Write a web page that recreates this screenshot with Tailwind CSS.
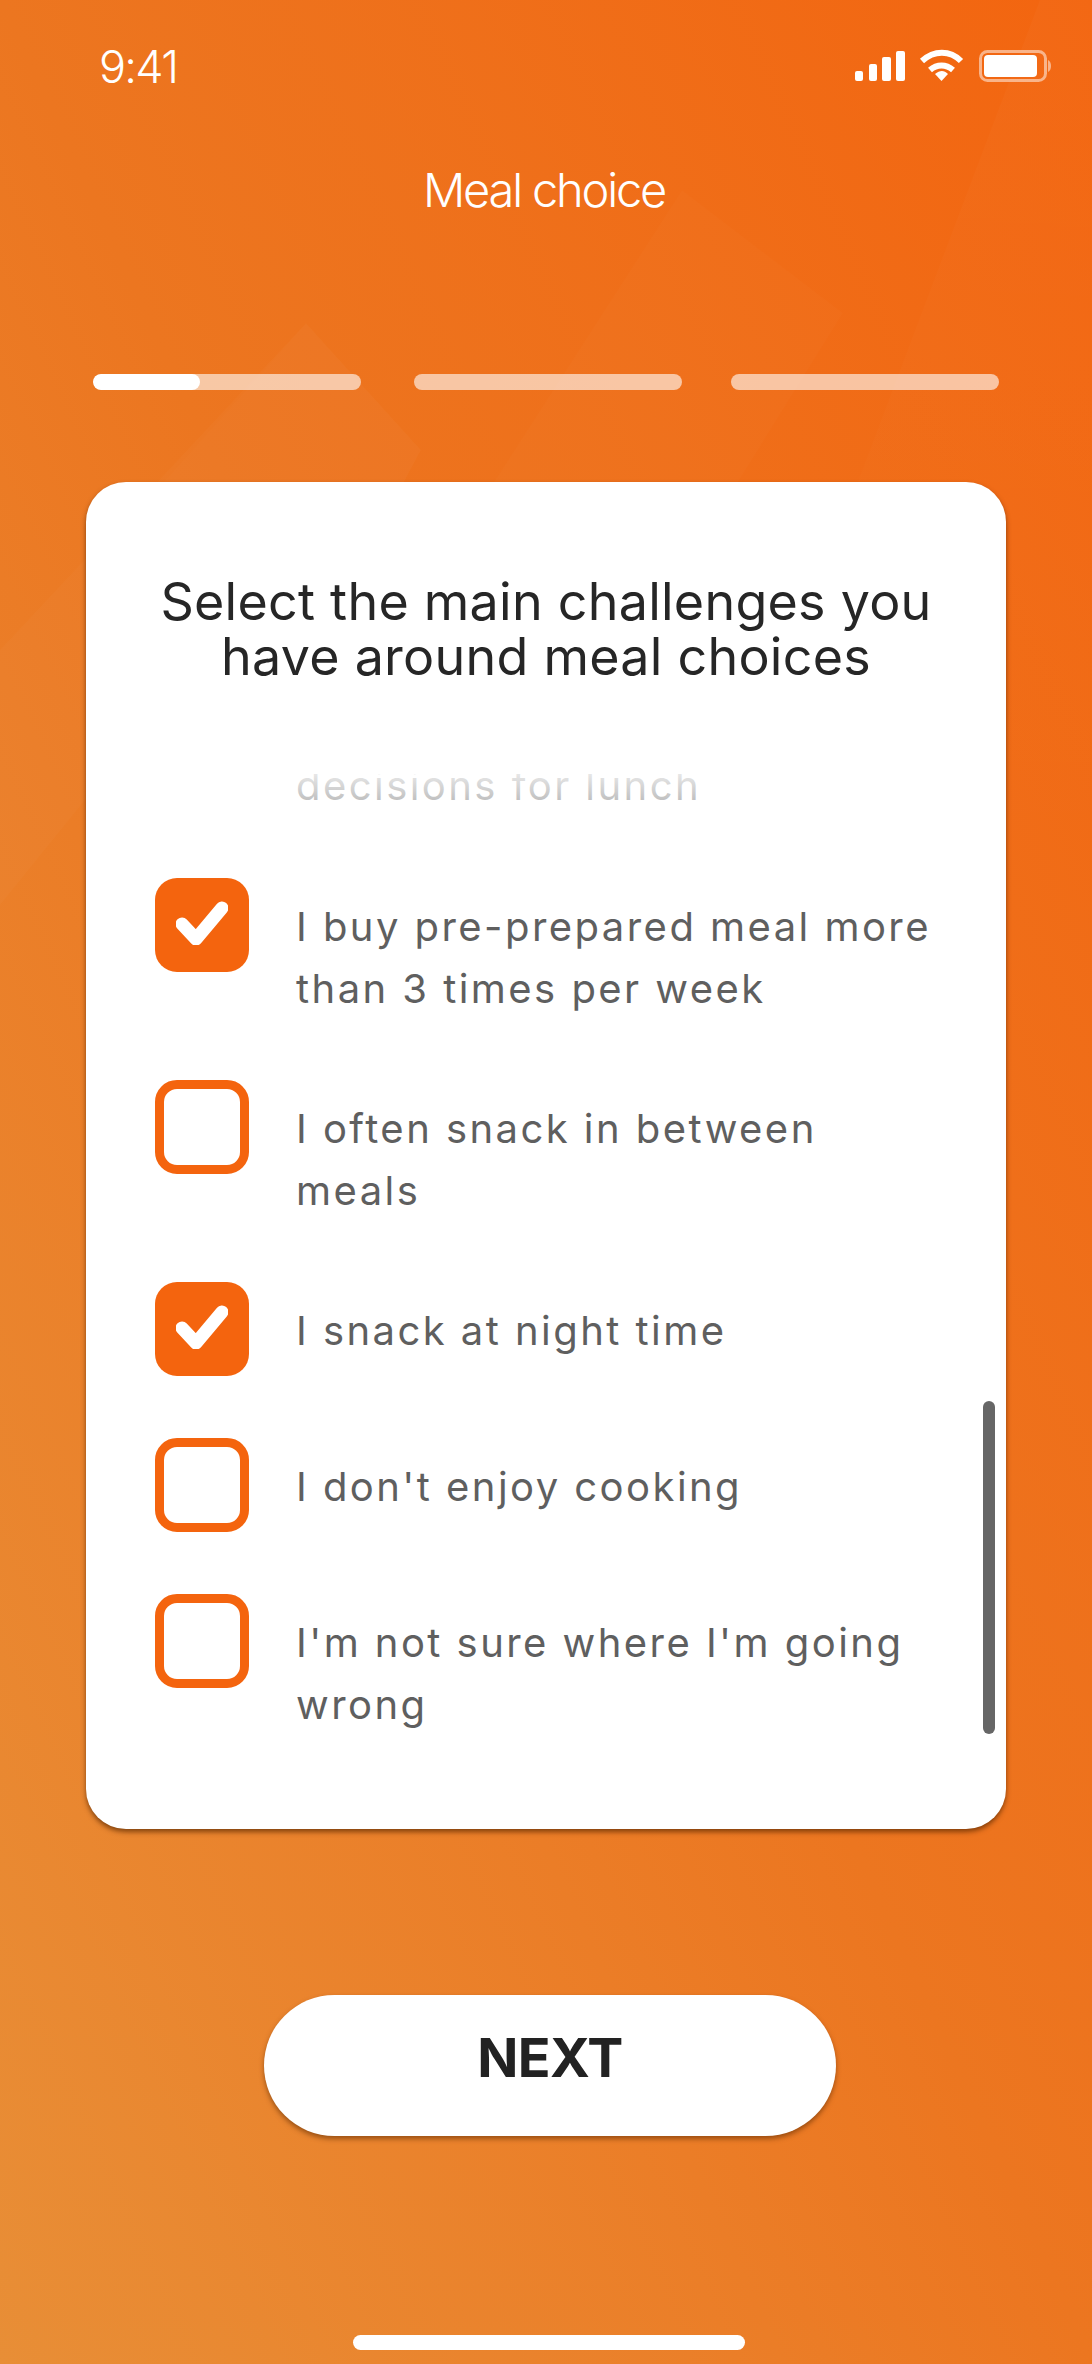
<!DOCTYPE html>
<html>
<head>
<meta charset="utf-8">
<script src="https://cdn.jsdelivr.net/npm/@tailwindcss/browser@4"></script>
</head>
<body class="m-0">
<div class="relative w-[1092px] h-[2364px] overflow-hidden bg-gradient-to-tr from-[#e88e36] via-[#ec7620] to-[#f3650f] font-['Inter','Noto_Sans',sans-serif]">
  <svg class="absolute inset-0" width="1092" height="2364" viewBox="0 0 1092 2364" fill="none">
    <defs>
      <linearGradient id="band" x1="0" y1="0" x2="0" y2="1">
        <stop offset="0" stop-color="#ffffff" stop-opacity=".022"/>
        <stop offset="1" stop-color="#ffffff" stop-opacity="0"/>
      </linearGradient>
    </defs>
    <path d="M1040 0L700 900H1092V0Z" fill="url(#band)"/>
    <path d="M0 650L306 323L421 450L404 482L85 800L0 905Z" fill="#ffffff" fill-opacity=".02"/>
    <path d="M306 323L421 450L404 482H164Z" fill="#ffffff" fill-opacity=".012"/>
    <path d="M682 190L843 313L738 482H494Z" fill="#ffffff" fill-opacity=".015"/>
  </svg>

  <div class="relative flex flex-col items-center h-full">
    <div class="w-full h-[132px] flex items-center justify-between pl-[99px] pr-[40px]">
      <span class="font-['Inter'] font-light text-[45px] leading-none tracking-[-1.7px] text-white">9:41</span>
      <svg width="197" height="34" viewBox="856 50 197 34" fill="none">
        <rect x="856" y="72" width="8" height="10" rx="2" fill="#fff"/>
        <rect x="870" y="65" width="8" height="17" rx="2" fill="#fff"/>
        <rect x="883" y="58" width="9" height="24" rx="2" fill="#fff"/>
        <rect x="897" y="52" width="9" height="30" rx="2" fill="#fff"/>
        <path d="M923 62C935 51 951 51 962 62" stroke="#fff" stroke-width="6"/>
        <path d="M931 71C938 65 947 65 954 71" stroke="#fff" stroke-width="6"/>
        <path d="M936 75C941 71 945 71 949 75L942.5 82Z" fill="#fff"/>
        <rect x="981.5" y="52.5" width="65" height="29" rx="7" stroke="#fff" stroke-opacity=".5" stroke-width="3"/>
        <rect x="985" y="56" width="53" height="22" rx="4" fill="#fff"/>
        <path d="M1049 61C1051 62 1052 64 1052 67C1052 70 1051 72 1049 73Z" fill="#fff" fill-opacity=".5"/>
      </svg>
    </div>

    <h1 class="mt-[30px] -ml-[4px] font-['Inter'] font-light text-[47px] leading-[56px] tracking-[-2.2px] text-white">Meal choice</h1>

    <div class="mt-[156px] w-[906px] flex">
      <div class="w-[268px] h-[16px] rounded-full bg-white/60 overflow-hidden"><div class="w-[107px] h-full rounded-full bg-white"></div></div>
      <div class="ml-[53px] w-[268px] h-[16px] rounded-full bg-white/60"></div>
      <div class="ml-[49px] w-[268px] h-[16px] rounded-full bg-white/60"></div>
    </div>

    <section class="relative mt-[92px] w-[920px] h-[1347px] rounded-[40px] bg-white shadow-[0_3px_5px_rgba(90,40,0,0.7)] overflow-hidden">
      <h2 class="pt-[92px] text-center text-[#262626] text-[52px] leading-[55px] font-normal tracking-[0.25px]">Select the main challenges you<br>have around meal choices</h2>

      <div class="absolute left-0 right-0 top-[292px] bottom-0 overflow-hidden">
        <div class="-mt-[99px] pl-[69px] pr-[30px] flex flex-col gap-[60px] text-[#5f5f5f] text-[40px] leading-[62px] tracking-[2.45px]">
          <div class="flex gap-[47px] h-[142px] mb-[1px]">
            <div class="shrink-0 w-[94px] h-[94px]"></div>
            <p class="pt-[18px]">I often make poor<br>decisions for lunch</p>
          </div>
          <div class="flex gap-[47px] h-[142px]">
            <div class="shrink-0 w-[94px] h-[94px] rounded-[22px] bg-[#f4640e] flex items-center justify-center">
              <svg class="-mt-[4px]" width="52" height="44" viewBox="0 0 52 44" fill="none"><path d="M6 23L20 38L46 7" stroke="#fff" stroke-width="13" stroke-linecap="round" stroke-linejoin="round"/></svg>
            </div>
            <p class="pt-[18px]">I buy pre-prepared meal more<br>than 3 times per week</p>
          </div>
          <div class="flex gap-[47px] h-[142px]">
            <div class="shrink-0 w-[94px] h-[94px] rounded-[22px] border-[9px] border-[#f4640e]"></div>
            <p class="pt-[18px]">I often snack in between<br>meals</p>
          </div>
          <div class="flex gap-[47px] h-[96px]">
            <div class="shrink-0 w-[94px] h-[94px] rounded-[22px] bg-[#f4640e] flex items-center justify-center">
              <svg class="-mt-[4px]" width="52" height="44" viewBox="0 0 52 44" fill="none"><path d="M6 23L20 38L46 7" stroke="#fff" stroke-width="13" stroke-linecap="round" stroke-linejoin="round"/></svg>
            </div>
            <p class="pt-[18px]">I snack at night time</p>
          </div>
          <div class="flex gap-[47px] h-[96px]">
            <div class="shrink-0 w-[94px] h-[94px] rounded-[22px] border-[9px] border-[#f4640e]"></div>
            <p class="pt-[18px]">I don't enjoy cooking</p>
          </div>
          <div class="flex gap-[47px] h-[142px]">
            <div class="shrink-0 w-[94px] h-[94px] rounded-[22px] border-[9px] border-[#f4640e]"></div>
            <p class="pt-[18px]">I'm not sure where I'm going<br>wrong</p>
          </div>
        </div>
        <div class="absolute left-0 right-0 top-0 h-[44px] bg-gradient-to-b from-white/85 to-white/45"></div>
      </div>
      <div class="absolute left-[897px] top-[919px] w-[12px] h-[333px] rounded-full bg-[#666666]"></div>
    </section>

    <button class="mt-[166px] ml-[8px] w-[572px] h-[141px] rounded-full bg-white shadow-[0_3px_5px_rgba(90,40,0,0.55)] pb-[16px] text-[#222222] text-[54px] font-bold tracking-[-0.5px] leading-none">NEXT</button>

    <div class="absolute left-[353px] top-[2335px] w-[392px] h-[15px] rounded-full bg-white"></div>
  </div>
</div>
</body>
</html>
